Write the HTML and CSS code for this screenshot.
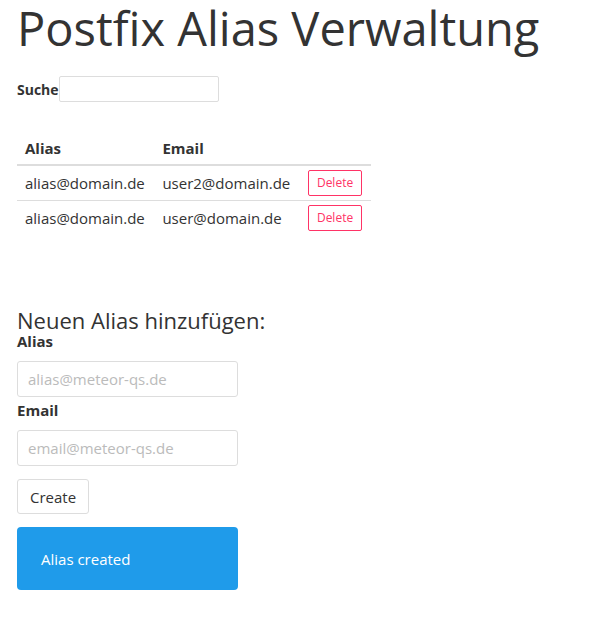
FILE: index.html
```html
<!DOCTYPE html>
<html lang="de">
<head>
<meta charset="utf-8">
<title>Postfix Alias Verwaltung</title>
<link rel="stylesheet" href="styles.css">
</head>
<body>
<div class="container">
  <h1 class="title">Postfix Alias Verwaltung</h1>
  <div class="search">
    <label class="search-label" for="q">Suche</label><input id="q" class="search-input" type="text">
  </div>
  <table class="alias-table">
    <thead>
      <tr><th>Alias</th><th>Email</th><th></th></tr>
    </thead>
    <tbody>
      <tr><td>alias@domain.de</td><td>user2@domain.de</td><td><button class="btn-delete">Delete</button></td></tr>
      <tr><td>alias@domain.de</td><td>user@domain.de</td><td><button class="btn-delete">Delete</button></td></tr>
    </tbody>
  </table>
  <form class="add-form">
    <h2 class="form-title">Neuen Alias hinzufügen:</h2>
    <label class="field-label">Alias</label>
    <input class="field-input" type="text" placeholder="alias@meteor-qs.de">
    <label class="field-label">Email</label>
    <input class="field-input" type="text" placeholder="email@meteor-qs.de">
    <button type="button" class="btn-create">Create</button>
    <div class="alert">Alias created</div>
  </form>
</div>
</body>
</html>
```
FILE: styles.css
```css
* { box-sizing: border-box; }
body {
  margin: 0;
  font-family: "Open Sans", "Noto Sans", sans-serif;
  font-size: 15px;
  color: #333;
  background: #fff;
}
.container {
  padding: 0 17px;
}
.title {
  margin: 0;
  font-size: 47px;
  font-weight: 400;
  line-height: 57px;
  color: #333;
}
.search {
  margin-top: 19px;
  display: flex;
  align-items: center;
  height: 26px;
}
.search-label {
  font-weight: 700;
  font-size: 14px;
}
.search-input {
  width: 160px;
  height: 26px;
  border: 1px solid #ddd;
  border-radius: 2px;
}
.alias-table {
  margin-top: 28px;
  border-collapse: collapse;
  width: 354px;
}
.alias-table th {
  text-align: left;
  font-weight: 700;
  line-height: 20px;
  padding: 8px 8px 6px;
  border-bottom: 2px solid #ddd;
}
.alias-table td {
  padding: 0 8px;
  height: 35px;
  vertical-align: middle;
}
.alias-table tbody tr + tr td {
  border-top: 1px solid #ddd;
}
.btn-delete {
  font-family: inherit;
  font-size: 12px;
  line-height: 16px;
  color: #ff3366;
  background: #fff;
  border: 1px solid #ff3366;
  border-radius: 2px;
  padding: 4px 8px;
}
.add-form {
  margin-top: 74px;
  display: flex;
  flex-direction: column;
  align-items: flex-start;
  width: 221px;
}
.form-title {
  margin: 0;
  font-size: 22px;
  font-weight: 400;
  line-height: 22px;
  white-space: nowrap;
}
.field-label {
  font-weight: 700;
  font-size: 15px;
  line-height: 20px;
  margin-bottom: 10px;
}
.field-input {
  width: 221px;
  height: 36px;
  border: 1px solid #ddd;
  border-radius: 3px;
  padding: 0 10px;
  font-family: inherit;
  font-size: 15px;
  margin-bottom: 3px;
}
.field-input::placeholder { color: #bbb; }
.btn-create {
  margin-top: 10px;
  height: 35px;
  padding: 0 12px;
  font-family: inherit;
  font-size: 15px;
  color: #333;
  background: #fff;
  border: 1px solid #ddd;
  border-radius: 3px;
}
.alert {
  margin-top: 13px;
  width: 221px;
  height: 63px;
  padding: 0 24px;
  display: flex;
  align-items: center;
  background: #1f9bea;
  color: #fff;
  border-radius: 4px;
}
```
